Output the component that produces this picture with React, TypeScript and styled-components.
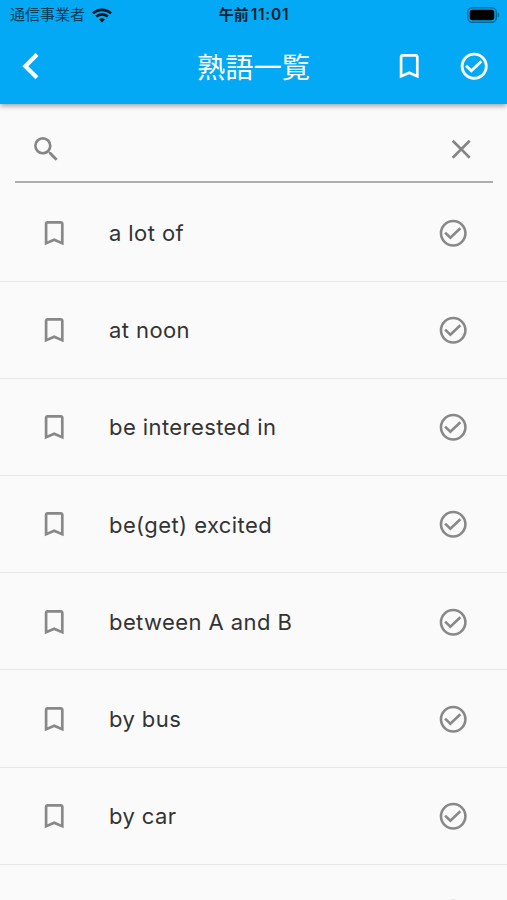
import React from "react";
import styled, { createGlobalStyle } from "styled-components";

const Global = createGlobalStyle`
  * { box-sizing: border-box; }
  body { margin: 0; background: #fafafa; overflow: hidden; }
`;

const Screen = styled.main`
  width: 507px;
  height: 900px;
  overflow: hidden;
  display: flex;
  flex-direction: column;
  background: #fafafa;
  font-family: Inter, "Noto Sans CJK JP", sans-serif;
`;

const Header = styled.header`
  flex: none;
  height: 103.5px;
  background: #03a9f4;
  box-shadow: 0 2px 5px rgba(0, 0, 0, 0.36);
  z-index: 1;
`;

const StatusBar = styled.div`
  height: 28px;
  padding: 2px 7px 0 10px;
  display: grid;
  grid-template-columns: 1fr auto 1fr;
  align-items: center;
`;

const Carrier = styled.div`
  display: flex;
  align-items: center;
  gap: 7px;
  font-size: 15px;
  line-height: 26px;
  color: #063d57;
`;

const Clock = styled.div`
  display: flex;
  gap: 2px;
  padding-right: 2px;
  font-size: 15px;
  line-height: 26px;
  font-weight: 600;
  color: #04202e;
`;

const Digits = styled.span`
  font-size: 15.5px;
  letter-spacing: 0.7px;
`;

const BatterySlot = styled.div`
  display: flex;
  justify-content: flex-end;
`;

const Toolbar = styled.div`
  height: 75px;
  padding: 2px 16.5px 0 14px;
  display: grid;
  grid-template-columns: 1fr auto 1fr;
  align-items: center;
  color: #fff;
`;

const Title = styled.h1`
  margin: 0;
  padding: 2px 0 0 2.5px;
  font-size: 28.3px;
  line-height: 40px;
  font-weight: 400;
`;

const Actions = styled.div`
  display: flex;
  justify-content: flex-end;
  gap: 32.5px;
`;

const IconButton = styled.button`
  display: flex;
  padding: 0;
  border: 0;
  background: none;
  color: inherit;
`;

const SearchField = styled.div`
  flex: none;
  height: 79px;
  margin: 0 14px 0 15px;
  padding: 14.5px 16px 0 15px;
  display: flex;
  align-items: center;
  justify-content: space-between;
  border-bottom: 2px solid #adadad;
  color: #858585;
`;

const List = styled.ul`
  flex: none;
  margin: 0;
  padding: 2px 0 0;
  list-style: none;
`;

const Row = styled.li`
  height: 97.2px;
  padding: 1px 38px 0 38.4px;
  display: grid;
  grid-template-columns: 70.6px 1fr auto;
  align-items: center;
  border-bottom: 1px solid #e7e7e7;
  color: #888;
`;

const Phrase = styled.span`
  font-size: 22px;
  line-height: 32px;
  letter-spacing: 0.42px;
  color: #333;
`;

const Glyph = styled.svg`
  display: block;
  width: 32.4px;
  height: 32.4px;
  fill: currentColor;
`;

const PATHS = {
  bookmark:
    "M17 3H7c-1.1 0-2 .9-2 2v16l7-3 7 3V5c0-1.1-.9-2-2-2zm0 15-5-2.18L7 18V5h10v13z",
  search:
    "M15.5 14h-.79l-.28-.27A6.471 6.471 0 0 0 16 9.5 6.5 6.5 0 1 0 9.5 16c1.61 0 3.09-.59 4.23-1.57l.27.28v.79l5 4.99L20.49 19l-4.99-5zm-6 0C7.01 14 5 11.99 5 9.5S7.01 5 9.5 5 14 7.01 14 9.5 11.99 14 9.5 14z",
  close:
    "M19 6.41 17.59 5 12 10.59 6.41 5 5 6.41 10.59 12 5 17.59 6.41 19 12 13.41 17.59 19 19 17.59 13.41 12z",
  back: "M15.9 2.3 18.1 4.5 10.6 12l7.5 7.5-2.2 2.2L6.2 12z",
};

const Icon = ({ name }: { name: keyof typeof PATHS }) => (
  <Glyph viewBox="0 0 24 24" aria-hidden="true">
    <path d={PATHS[name]} />
  </Glyph>
);

const CheckCircle = ({ weight = 1.9 }: { weight?: number }) => (
  <Glyph viewBox="0 0 24 24" aria-hidden="true">
    <g fill="none" stroke="currentColor">
      <circle cx="12" cy="12" r={10 - weight / 2} strokeWidth={weight} />
      <path d="M6 11.6 9.9 15.4 17.3 8.3" strokeWidth={weight} />
    </g>
  </Glyph>
);

const Wifi = () => (
  <svg width="20" height="15" viewBox="0 0 20 15" fill="none" stroke="#04141c" strokeWidth="2.7">
    <path d="M1 5.3C6 .7 14 .7 19 5.3M4.2 8.6c3.3-3.1 8.3-3.1 11.6 0" />
    <path d="M10 14.5 7 11.5c1.7-1.6 4.3-1.6 6 0z" fill="#04141c" stroke="none" />
  </svg>
);

const Battery = () => (
  <svg width="33" height="16" viewBox="0 0 33 16">
    <rect x=".7" y=".7" width="28.6" height="14.6" rx="4.5" fill="none" stroke="#046a9a" strokeWidth="1.4" />
    <rect x="2.7" y="2.7" width="24.6" height="10.6" rx="2.7" fill="#000" />
    <path d="M30.7 5.5c2 .8 2 4.2 0 5z" fill="#046a9a" />
  </svg>
);

const PHRASES = [
  "a lot of",
  "at noon",
  "be interested in",
  "be(get) excited",
  "between A and B",
  "by bus",
  "by car",
  "",
];

export default function App() {
  return (
    <>
      <Global />
      <Screen>
        <Header>
          <StatusBar>
            <Carrier>
              通信事業者
              <Wifi />
            </Carrier>
            <Clock>
              午前<Digits>11:01</Digits>
            </Clock>
            <BatterySlot>
              <Battery />
            </BatterySlot>
          </StatusBar>
          <Toolbar>
            <IconButton aria-label="戻る">
              <Icon name="back" />
            </IconButton>
            <Title>熟語一覧</Title>
            <Actions>
              <IconButton>
                <Icon name="bookmark" />
              </IconButton>
              <IconButton>
                <CheckCircle weight={2.1} />
              </IconButton>
            </Actions>
          </Toolbar>
        </Header>
        <SearchField>
          <Icon name="search" />
          <Icon name="close" />
        </SearchField>
        <List>
          {PHRASES.map((phrase, i) => (
            <Row key={i}>
              <Icon name="bookmark" />
              <Phrase>{phrase}</Phrase>
              <CheckCircle />
            </Row>
          ))}
        </List>
      </Screen>
    </>
  );
}
